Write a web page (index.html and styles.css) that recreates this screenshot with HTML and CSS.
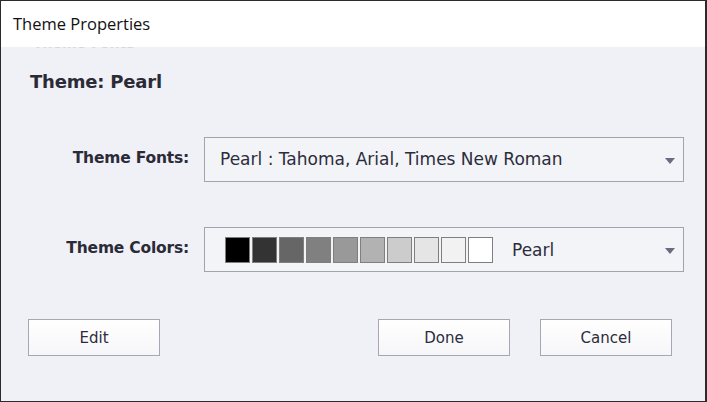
FILE: index.html
```html
<!DOCTYPE html>
<html>
<head>
<meta charset="utf-8">
<link rel="stylesheet" href="styles.css">
</head>
<body>
<div class="window">
  <div class="titlebar">Theme Properties</div>
  <div class="content">
    <div class="ghost">Theme Fonts</div>
    <div class="heading">Theme: Pearl</div>
    <div class="form">
      <div class="label">Theme Fonts:</div>
      <div class="dropdown">
        <span class="dd-text">Pearl : Tahoma, Arial, Times New Roman</span>
        <span class="arrow"></span>
      </div>
      <div class="label">Theme Colors:</div>
      <div class="dropdown">
        <div class="swatches">
          <span class="sw" style="background:#000000"></span>
          <span class="sw" style="background:#333333"></span>
          <span class="sw" style="background:#666666"></span>
          <span class="sw" style="background:#808080"></span>
          <span class="sw" style="background:#999999"></span>
          <span class="sw" style="background:#b2b2b2"></span>
          <span class="sw" style="background:#cccccc"></span>
          <span class="sw" style="background:#e5e5e5"></span>
          <span class="sw" style="background:#f2f2f2"></span>
          <span class="sw" style="background:#ffffff"></span>
        </div>
        <span class="dd-text name">Pearl</span>
        <span class="arrow"></span>
      </div>
    </div>
    <div class="buttons">
      <button class="btn">Edit</button>
      <div class="spacer"></div>
      <button class="btn">Done</button>
      <button class="btn">Cancel</button>
    </div>
  </div>
</div>
</body>
</html>
```

FILE: styles.css
```css
html, body {
  margin: 0;
  padding: 0;
}
body {
  width: 707px;
  height: 402px;
  overflow: hidden;
  background: #f0f1f6;
}
.window {
  box-sizing: border-box;
  width: 707px;
  height: 402px;
  border: 1px solid #2b2b2b;
  border-right-width: 2px;
  display: flex;
  flex-direction: column;
  background: #f0f1f6;
}
.titlebar {
  height: 46px;
  flex: none;
  background: #ffffff;
  font-family: "Open Sans", "Noto Sans", sans-serif;
  font-size: 16.5px;
  color: #111;
  padding-left: 12px;
  line-height: 45px;
}
.content {
  flex: 1;
  position: relative;
  overflow: hidden;
  display: flex;
  flex-direction: column;
  font-family: "DejaVu Sans", Verdana, sans-serif;
  color: #2a2a36;
}
.ghost {
  position: absolute;
  left: 32px;
  top: -11px;
  font-size: 14px;
  font-weight: bold;
  color: #d6d7dd;
  line-height: 14px;
}
.heading {
  margin: 23px 0 0 29px;
  font-size: 18px;
  font-weight: bold;
  height: 24px;
  line-height: 24px;
  color: #2b2b38;
  letter-spacing: -0.2px;
}
.form {
  margin-top: 43px;
  display: grid;
  grid-template-columns: 188px 480px;
  grid-template-rows: 45px 45px;
  column-gap: 15px;
  row-gap: 45px;
  align-items: center;
}
.label {
  text-align: right;
  font-size: 15.5px;
  font-weight: bold;
  color: #2b2b38;
  letter-spacing: -0.2px;
  margin-top: -3px;
}
.dropdown {
  box-sizing: border-box;
  height: 45px;
  border: 1px solid #a3a3ab;
  background: #f3f4f8;
  display: flex;
  align-items: center;
  padding-left: 15px;
  position: relative;
}
.dd-text {
  font-size: 17px;
  color: #2c2c3c;
  margin-top: -2px;
}
.arrow {
  position: absolute;
  right: 8px;
  top: 20px;
  width: 0;
  height: 0;
  border-left: 5px solid transparent;
  border-right: 5px solid transparent;
  border-top: 6px solid #6b6b80;
}
.swatches {
  display: flex;
  gap: 2px;
  margin-left: 5px;
}
.sw {
  box-sizing: border-box;
  width: 25px;
  height: 26px;
  border: 1px solid #7f7f7f;
}
.name {
  margin-left: 19px;
  margin-top: 0;
}
.buttons {
  margin-top: 47px;
  display: flex;
  padding-left: 27px;
  gap: 30px;
}
.spacer {
  width: 158px;
}
.btn {
  box-sizing: border-box;
  width: 132px;
  height: 37px;
  border: 1px solid #a6a6b4;
  background: linear-gradient(#ffffff, #f6f6f9);
  font-family: "DejaVu Sans", Verdana, sans-serif;
  font-size: 15px;
  color: #2c2c3c;
  padding: 0;
}
```
